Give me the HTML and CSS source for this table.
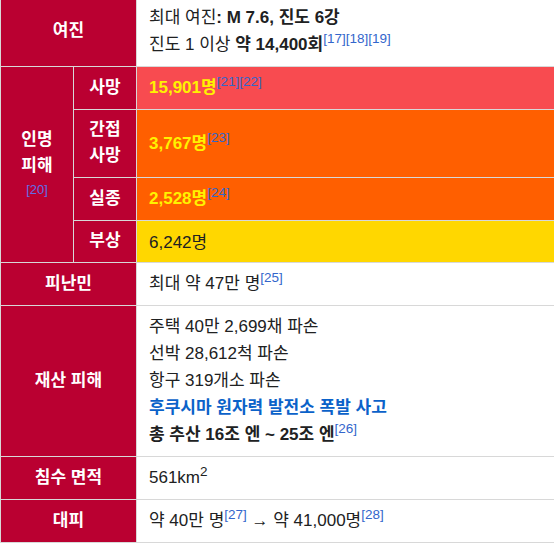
FILE: index.html
```html
<!DOCTYPE html>
<html lang="ko">
<head>
    <meta charset="UTF-8">
    <meta name="viewport" content="width=device-width, initial-scale=1.0">
    <title>피해 정보</title>
    <link rel="stylesheet" href="styles.css">
</head>
<body>
    <table class="infobox">
        <colgroup>
            <col class="col-group">
            <col class="col-sub">
            <col>
        </colgroup>
        <tr>
            <th colspan="2">여진</th>
            <td>최대 여진<b>: M 7.6, 진도 6강</b><br>진도 1 이상 <b>약 14,400회</b><sup class="ref">[17][18][19]</sup></td>
        </tr>
        <tr>
            <th rowspan="4">인명 피해<br><span class="ref-head">[20]</span></th>
            <th>사망</th>
            <td class="dead"><b class="hot">15,901명</b><sup class="ref">[21][22]</sup></td>
        </tr>
        <tr>
            <th>간접 사망</th>
            <td class="orange"><b class="hot">3,767명</b><sup class="ref">[23]</sup></td>
        </tr>
        <tr>
            <th>실종</th>
            <td class="orange"><b class="hot">2,528명</b><sup class="ref">[24]</sup></td>
        </tr>
        <tr>
            <th>부상</th>
            <td class="yellow">6,242명</td>
        </tr>
        <tr>
            <th colspan="2">피난민</th>
            <td>최대 약 47만 명<sup class="ref">[25]</sup></td>
        </tr>
        <tr>
            <th colspan="2">재산 피해</th>
            <td>주택 40만 2,699채 파손<br>선박 28,612척 파손<br>항구 319개소 파손<br><a href="#" class="link">후쿠시마 원자력 발전소 폭발 사고</a><br><b>총 추산 16조 엔 ~ 25조 엔</b><sup class="ref">[26]</sup></td>
        </tr>
        <tr>
            <th colspan="2">침수 면적</th>
            <td>561km<sup>2</sup></td>
        </tr>
        <tr>
            <th colspan="2">대피</th>
            <td>약 40만 명<sup class="ref">[27]</sup> → 약 41,000명<sup class="ref">[28]</sup></td>
        </tr>
    </table>
</body>
</html>
```

FILE: styles.css
```css
body {
    margin: 0;
    font-family: "Liberation Sans", "Noto Sans CJK KR", sans-serif;
    font-size: 17px;
    color: #202122;
    background: #fff;
    overflow: hidden;
}
.infobox {
    width: 100%;
    margin-top: -4px;
    border-collapse: collapse;
    table-layout: fixed;
    line-height: 27px;
    word-break: keep-all;
}
.col-group {
    width: 73px;
}
.col-sub {
    width: 63px;
}
.infobox th,
.infobox td {
    border: 1px solid #d8d8d8;
    padding: 7px 12px 8px;
    vertical-align: middle;
}
.infobox th {
    background-color: #ba0031;
    color: #fff;
    text-align: center;
    font-weight: bold;
    line-height: 26px;
    padding: 7px 6px 8px;
}
.infobox td {
    text-align: left;
    border-right: none;
}
.infobox td.yellow {
    padding-bottom: 6px;
}
.ref-head {
    display: block;
    font-size: 13px;
    font-weight: normal;
    line-height: 22px;
    color: #5f6fe6;
}
sup {
    font-size: 13.5px;
    line-height: 1;
    vertical-align: super;
}
.ref {
    color: #3366cc;
}
.dead {
    background-color: #f84b50;
}
.orange {
    background-color: #ff5f00;
}
.yellow {
    background-color: #ffd700;
}
.hot {
    color: #fff200;
}
.link {
    color: #0b62c9;
    font-weight: bold;
    text-decoration: none;
}
```
